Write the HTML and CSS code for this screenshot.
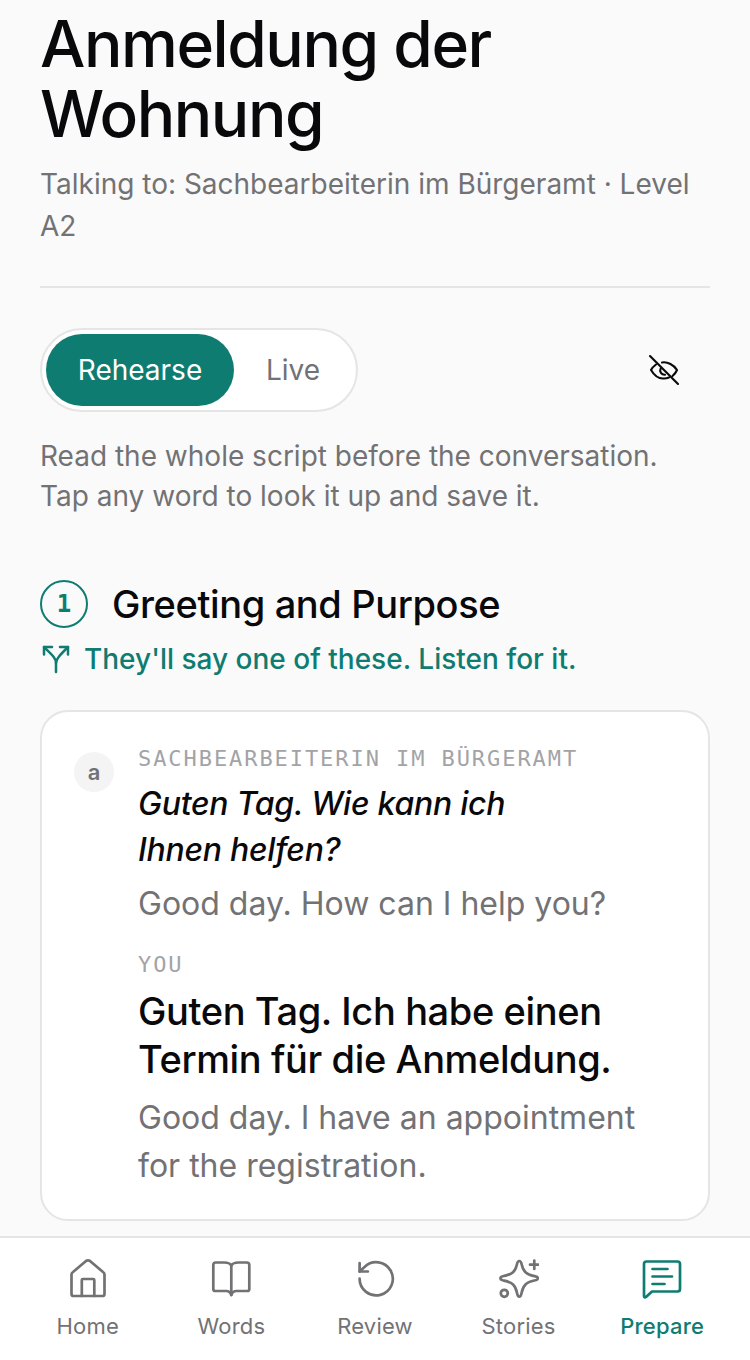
FILE: index.html
```html
<!DOCTYPE html>
<html lang="en">
<head>
<meta charset="utf-8">
<title>Anmeldung der Wohnung</title>
<link rel="stylesheet" href="styles.css">
</head>
<body>
<div class="app">
  <main class="main">
    <header class="head">
      <h1 class="title">Anmeldung der Wohnung</h1>
      <p class="sub">Talking to: Sachbearbeiterin im Bürgeramt · Level A2</p>
    </header>
    <div class="controls">
      <div class="toggle">
        <span class="seg seg-on">Rehearse</span>
        <span class="seg">Live</span>
      </div>
      <svg class="eye" viewBox="0 0 32 32" fill="none" stroke="#09090b" stroke-width="2.100" stroke-linecap="round" stroke-linejoin="round">
        <path d="M2 2l28 28"/>
        <path d="M14 8.500C19.500 7.500 26 11 29 16c-.8 2-2.300 4.200-4.500 6"/>
        <path d="M8 10.500C6 12 4 14 3 16c3 5 8 9 13 8.500 1.800 0 3.500-.4 5-1"/>
        <path d="M12.700 14.500c-1.600 3 .8 6.400 4.300 6.200"/>
      </svg>
    </div>
    <p class="hint">Read the whole script before the conversation.<br>Tap any word to look it up and save it.</p>
    <section class="step">
      <div class="step-head">
        <span class="num">1</span>
        <h2 class="step-title">Greeting and Purpose</h2>
      </div>
      <div class="branch">
        <svg class="branch-ico" viewBox="0 0 30 30" fill="none" stroke="#0f7c72" stroke-width="2.500" stroke-linecap="round" stroke-linejoin="round">
          <path d="M16 28V19C16 14 12 11 4 3"/>
          <path d="M16 19C16 15 20 11 28 3"/>
          <path d="M4 10.500V3h8"/>
          <path d="M20 3h8v7.500"/>
        </svg>
        <span>They'll say one of these. Listen for it.</span>
      </div>
      <article class="card">
        <span class="avatar">a</span>
        <div class="lines">
          <div class="who">SACHBEARBEITERIN IM BÜRGERAMT</div>
          <p class="de-them">Guten Tag. Wie kann ich<br>Ihnen helfen?</p>
          <p class="en-them">Good day. How can I help you?</p>
          <div class="who who-you">YOU</div>
          <p class="de-you">Guten Tag. Ich habe einen Termin für die Anmeldung.</p>
          <p class="en-you">Good day. I have an appointment for the registration.</p>
        </div>
      </article>
    </section>
  </main>
  <nav class="nav">
    <div class="tab">
      <svg class="tab-ico" viewBox="0 0 40 40" fill="none" stroke="currentColor" stroke-width="2.700" stroke-linecap="round" stroke-linejoin="round">
        <path d="M3.500 15.500Q3.500 14 5 13L18 2Q20 .8 22 2L35 13Q36.500 14 36.500 15.500V35Q36.500 37 34.500 37H5.500Q3.500 37 3.500 35Z"/>
        <path d="M13.800 37V21a1 1 0 0 1 1-1h10.500a1 1 0 0 1 1 1V37"/>
      </svg>
      <span>Home</span>
    </div>
    <div class="tab">
      <svg class="tab-ico" viewBox="0 0 40 40" fill="none" stroke="currentColor" stroke-width="2.700" stroke-linecap="round" stroke-linejoin="round">
        <path d="M20.300 6.500C18.800 4 16.300 3.500 13.300 3.500H4.800a2.500 2.500 0 0 0-2.500 2.500v24a2 2 0 0 0 2 2h11c2.500 0 4 1 5 4 1-3 2.500-4 5-4h11a2 2 0 0 0 2-2V6a2.500 2.500 0 0 0-2.500-2.500H27.300c-3 0-5.500 .5-7 3z"/>
        <path d="M20.300 6.500V36"/>
      </svg>
      <span>Words</span>
    </div>
    <div class="tab">
      <svg class="tab-ico" viewBox="0 0 40 40" fill="none" stroke="currentColor" stroke-width="2.700" stroke-linecap="round" stroke-linejoin="round">
        <path d="M4.600 19.700A16.600 16.600 0 1 0 9.500 8L4.600 12.500"/>
        <path d="M4.600 4.200v8.300h8.300"/>
      </svg>
      <span>Review</span>
    </div>
    <div class="tab">
      <svg class="tab-ico" viewBox="0 0 40 40" fill="none" stroke="currentColor" stroke-width="2.700" stroke-linecap="round" stroke-linejoin="round">
        <path d="M20.300 2C21.800 2 22.300 3.500 22.700 5.500C24 12 27 15.500 36.500 17.300C38 17.600 38.800 18.200 38.800 19.300C38.800 20.400 38 21 36.500 21.300C27 23 24 26.500 22.700 33.500C22.300 35.800 21.800 37.600 20.300 37.600C18.800 37.600 18.300 35.800 17.900 33.500C16.600 26.500 13.600 23 3.800 21.300C2.300 21 1.500 20.400 1.500 19.300C1.500 18.200 2.300 17.600 3.800 17.300C13.600 15.500 16.600 12 17.900 5.500C18.300 3.500 18.800 2 20.300 2Z"/>
        <path d="M35.300 1.500V10M31 5.700h8.500"/>
        <circle cx="5.300" cy="34.300" r="3.500"/>
      </svg>
      <span>Stories</span>
    </div>
    <div class="tab tab-on">
      <svg class="tab-ico" viewBox="0 0 40 40" fill="none" stroke="currentColor" stroke-width="2.700" stroke-linecap="round" stroke-linejoin="round">
        <path d="M2 5a2.500 2.500 0 0 1 2.500-2.500h31A2.500 2.500 0 0 1 38 5v25a2.500 2.500 0 0 1-2.500 2.500H10l-6 5.500c-1 .8-2 .2-2-1z"/>
        <path d="M10.500 10h15M10.500 17.500H30M10.500 25h12"/>
      </svg>
      <span>Prepare</span>
    </div>
  </nav>
</div>
</body>
</html>
```
FILE: styles.css
```css
* { box-sizing: border-box; }
html, body { margin: 0; padding: 0; }
body {
  width: 750px;
  height: 1360px;
  overflow: hidden;
  background: #fafafa;
  font-family: Inter, "Noto Sans", sans-serif;
  color: #09090b;
}
.app { display: flex; flex-direction: column; height: 1360px; }
.main { flex: 1; min-height: 0; overflow: hidden; padding: 9px 40px 0; }
.head { border-bottom: 2px solid #e5e5e6; padding-bottom: 39px; }
.title { margin: 0; font-size: 64px; line-height: 70px; font-weight: 500; letter-spacing: -1.440px; color: #09090b; }
.sub { margin: 14px 0 0; font-size: 28px; line-height: 42px; color: #727275; }
.controls { display: flex; align-items: center; justify-content: space-between; margin-top: 40px; padding-right: 30px; }
.toggle { display: flex; align-items: center; height: 84px; padding: 4px; background: #fff; border: 2px solid #e5e5e6; border-radius: 42px; width: 318px; }
.seg { display: flex; align-items: center; justify-content: center; height: 72px; border-radius: 36px; font-size: 28px; color: #727275; flex: 1; }
.seg-on { flex: 0 0 188px; background: #0f7c72; color: #fff; }
.eye { width: 32px; height: 32px; }
.hint { margin: 24px 0 0; font-size: 28px; line-height: 40px; color: #727275; }
.step { margin-top: 63px; }
.step-head { display: flex; align-items: center; gap: 24px; }
.num { display: flex; align-items: center; justify-content: center; width: 48px; height: 48px; border: 2px solid #0f7c72; border-radius: 50%; color: #0f7c72; font-family: "DejaVu Sans Mono", monospace; font-size: 24px; font-weight: 700; }
.step-title { margin: 0; font-size: 38px; line-height: 50px; font-weight: 500; letter-spacing: -.380px; color: #09090b; }
.branch { display: flex; align-items: center; gap: 14px; margin-top: 8px; color: #0f7c72; font-size: 28px; line-height: 44px; font-weight: 500; }
.branch-ico { width: 30px; height: 30px; }
.card { display: flex; gap: 24px; margin-top: 29px; height: 511px; padding: 32px 32px 0; background: #fff; border: 2px solid #e5e5e6; border-radius: 28px; }
.avatar { display: flex; align-items: center; justify-content: center; flex: none; width: 40px; height: 40px; margin-top: 8px; border-radius: 50%; background: #f4f4f5; color: #727275; font-size: 22px; font-weight: 600; }
.lines { flex: 1; min-width: 0; }
.who { font-family: "DejaVu Sans Mono", "Liberation Mono", monospace; font-size: 22px; line-height: 30px; letter-spacing: 1.930px; color: #a3a3a6; }
.who-you { margin-top: 22px; }
.de-them { margin: 7px 0 0; font-size: 32px; line-height: 46px; font-style: italic; font-weight: 500; letter-spacing: -.260px; color: #09090b; }
.en-them { margin: 7px 0 0; font-size: 32px; line-height: 48px; color: #727275; }
.de-you { margin: 7px 0 0; font-size: 38px; line-height: 48px; font-weight: 500; letter-spacing: -.380px; color: #09090b; }
.en-you { margin: 11px 0 0; font-size: 32px; line-height: 48px; color: #727275; }
.nav { display: flex; flex: none; height: 124px; padding: 21px 16px 0; background: #fff; border-top: 2px solid #e5e5e6; }
.tab { flex: 1; display: flex; flex-direction: column; align-items: center; gap: 11px; color: #727275; font-size: 22px; line-height: 32px; letter-spacing: .220px; }
.tab-ico { width: 40px; height: 40px; }
.tab-on { color: #0f7c72; font-weight: 500; }
```
